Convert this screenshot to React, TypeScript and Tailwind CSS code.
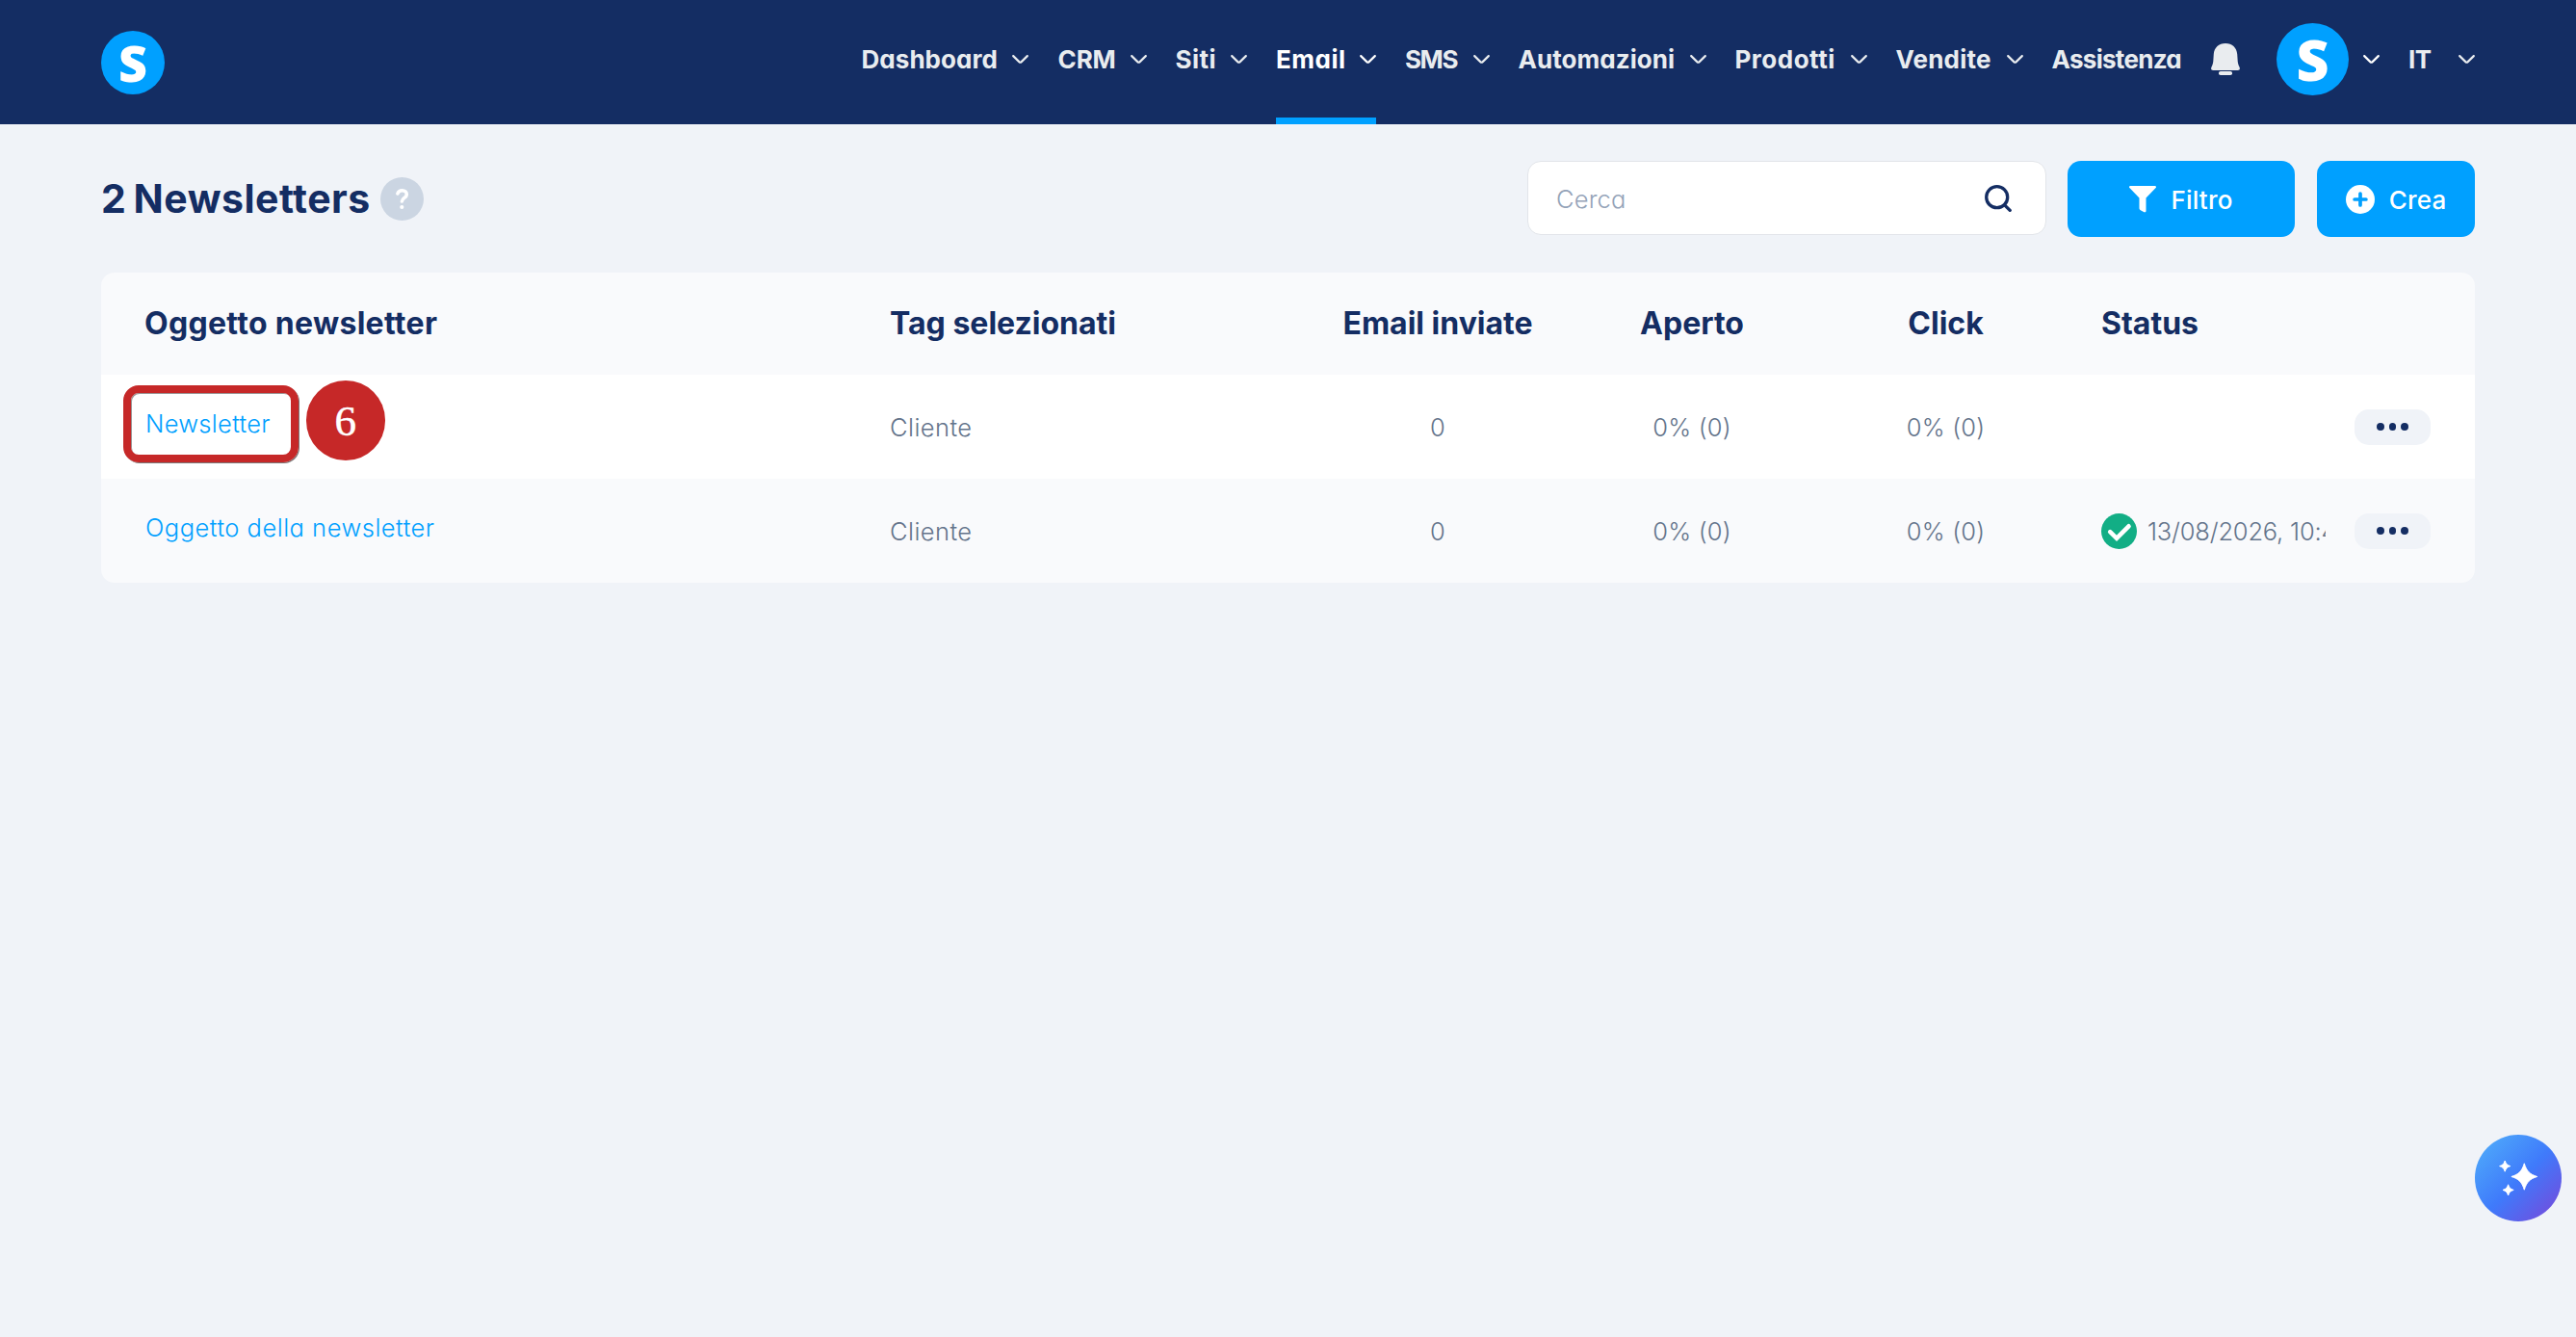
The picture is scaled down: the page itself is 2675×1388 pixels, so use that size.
const navItems = [
  { label: "Dashboard", width: "w-[157px] pl-px", tracking: "tracking-[0.05px]" },
  { label: "CRM", width: "w-[76px] pl-px", tracking: "tracking-[-0.1px]" },
  { label: "Siti", width: "w-[57.5px]", tracking: "tracking-[0.5px]" },
  { label: "Email", width: "w-[87px]", tracking: "tracking-[0.5px]", active: true },
  { label: "SMS", width: "w-[70.5px]", tracking: "tracking-[-1.4px]" },
  { label: "Automazioni", width: "w-[178px]", tracking: "tracking-[0.05px]" },
  { label: "Prodotti", width: "w-[120px]", tracking: "tracking-[0.5px]" },
  { label: "Vendite", width: "w-[115px]", tracking: "tracking-[0.2px]" },
]

const newsletters = [
  { subject: "Newsletter", tracking: "tracking-[0.3px]", tag: "Cliente", sent: "0", opened: "0% (0)", clicks: "0% (0)", date: "" },
  {
    subject: "Oggetto della newsletter",
    tracking: "tracking-[0.5px]",
    tag: "Cliente",
    sent: "0",
    opened: "0% (0)",
    clicks: "0% (0)",
    date: "13/08/2026, 10:45",
  },
]

const columns = "grid grid-cols-[772px_437px_264px_264px_263px_263px_155px] pl-[47px]"

function Chevron() {
  return (
    <svg width="17" height="9" viewBox="0 0 17 9" fill="none" className="shrink-0">
      <path
        d="M1.2 1.1L7.3 7.1Q8.5 8.2 9.7 7.1L15.8 1.1"
        stroke="currentColor"
        strokeWidth="2.2"
        strokeLinecap="round"
        strokeLinejoin="round"
      />
    </svg>
  )
}

function Header() {
  return (
    <header className="h-[129px] bg-[#142d63] flex justify-between pl-[105px] pr-[105px] text-[26px] font-bold text-[#e9ecef]">
      <div className="flex items-center pt-px">
        <div className="w-[66px] h-[66px] rounded-full bg-[#00a0ff] flex items-center justify-center text-white font-['Open_Sans',sans-serif] font-extrabold text-[52px] leading-none">
          S
        </div>
      </div>

      <nav className="flex [font-feature-settings:'cv11']">
        {navItems.map((item) => (
          <a
            key={item.label}
            href="#"
            className={`relative flex items-center pb-[6px] mr-[30px] ${item.active ? "text-white" : ""}`}
          >
            <span className={`${item.width} ${item.tracking} whitespace-nowrap`}>{item.label}</span>
            <Chevron />
            {item.active && <span className="absolute left-0 right-0 bottom-0 h-[7px] bg-[#00a0ff]" />}
          </a>
        ))}
        <a href="#" className="flex items-center pb-[6px] w-[135.5px] mr-[30px] tracking-[-0.7px]">
          Assistenza
        </a>
        <button type="button" className="flex items-center pb-[6px] mr-[38px]">
          <svg width="30" height="33" viewBox="0 0 30 33" fill="currentColor">
            <path d="M15 0C8 0 3.4 4.6 2.8 11L2.3 18.5C2.1 21 1.4 22.6.5 24.6C-.4 26.8.3 28 2.2 28H27.8C29.7 28 30.4 26.8 29.5 24.6C28.6 22.6 27.9 21 27.7 18.5L27.2 11C26.6 4.6 22 0 15 0Z" />
            <rect x="8" y="29" width="14" height="4" rx="1.8" />
          </svg>
        </button>
        <button type="button" className="flex items-center pb-[6px] gap-[15px] mr-[30px] text-white">
          <span className="w-[75px] h-[75px] rounded-full bg-[#00a0ff] flex items-center justify-center font-['Open_Sans',sans-serif] font-extrabold text-[59px] leading-none">
            S
          </span>
          <Chevron />
        </button>
        <button type="button" className="flex items-center pb-[6px]">
          <span className="w-[52px] text-left tracking-[-0.5px]">IT</span>
          <Chevron />
        </button>
      </nav>
    </header>
  )
}

function Toolbar() {
  return (
    <div className="flex items-start pt-[38px] px-[105px]">
      <div className="flex items-center h-[79px]">
        <h1 className="text-[41px] leading-none font-bold text-[#142d63] tracking-[0.5px] w-[290px] whitespace-nowrap [word-spacing:-3px]">
          2 Newsletters
        </h1>
        <svg width="45" height="45" viewBox="0 0 45 45" fill="none">
          <circle cx="22.5" cy="22.5" r="22.5" fill="#cbd5e2" />
          <path
            d="M17.9 17C18.6 14.8 20.4 13.7 22.6 13.7C25.4 13.7 27.3 15.5 27.3 17.9C27.3 21.2 22.6 21.6 22.4 25"
            stroke="#fff"
            strokeWidth="3.6"
            strokeLinecap="round"
          />
          <circle cx="22.3" cy="31" r="2.1" fill="#fff" />
        </svg>
      </div>

      <div className="ml-auto flex items-start">
        <div className="w-[539px] h-[77px] bg-white border border-[#e2e5ea] rounded-[14px] flex items-center justify-between pl-[29px] pr-[35px]">
          <span className="text-[25.5px] font-[350] text-[#94a3b8] tracking-[0.15px] [font-feature-settings:'cv11'] pt-[4px]">
            Cerca
          </span>
          <svg width="28" height="28" viewBox="0 0 28 28" fill="none" stroke="#142d63" strokeWidth="3.3" strokeLinecap="round">
            <circle cx="12.7" cy="12.7" r="11" />
            <path d="M20.6 20.8L26.2 26.4" />
          </svg>
        </div>
        <button
          type="button"
          className="ml-[22px] w-[236px] h-[79px] rounded-[14px] bg-[#00a0ff] text-white text-[26px] font-medium flex items-center justify-center gap-[15px] tracking-[0.2px]"
        >
          <svg width="28" height="28" viewBox="0 0 28 28" fill="currentColor">
            <path d="M1.2 0H26.8C28 0 28.4 1.2 27.6 2L17.5 12.5V25.8C17.5 27.2 16.6 27.6 15.5 27.2L11.8 25.2C10.9 24.7 10.5 24 10.5 23V12.5L.4 2C-.4 1.2 0 0 1.2 0Z" />
          </svg>
          <span className="pt-px">Filtro</span>
        </button>
        <button
          type="button"
          className="ml-[23px] w-[164px] h-[79px] rounded-[14px] bg-[#00a0ff] text-white text-[26px] font-medium flex items-center justify-center gap-[15px] tracking-[0.2px]"
        >
          <svg width="30" height="30" viewBox="0 0 30 30">
            <circle cx="15" cy="15" r="15" fill="#fff" />
            <path d="M15 9.1V20.9M9.1 15H20.9" stroke="#00a0ff" strokeWidth="3.7" strokeLinecap="round" />
          </svg>
          <span className="pt-px">Crea</span>
        </button>
      </div>
    </div>
  )
}

function MoreButton() {
  return (
    <button type="button" className="w-[79px] h-[37px] rounded-[15px] bg-[#f0f3f8] flex items-center justify-center gap-[4.7px]">
      <span className="w-[7.6px] h-[7.6px] rounded-full bg-[#142d63]" />
      <span className="w-[7.6px] h-[7.6px] rounded-full bg-[#142d63]" />
      <span className="w-[7.6px] h-[7.6px] rounded-full bg-[#142d63]" />
    </button>
  )
}

function NewsletterTable() {
  return (
    <div className="mx-[105px] mt-[37px] rounded-[14px] overflow-hidden">
      <div
        className={`${columns} h-[106px] items-center bg-[#f9fafc] text-[32px] font-bold text-[#142d63] whitespace-nowrap`}
      >
        <div className="-ml-[2px] tracking-[0.3px]">Oggetto newsletter</div>
        <div>Tag selezionati</div>
        <div className="text-center">Email inviate</div>
        <div className="text-center">Aperto</div>
        <div className="text-center">Click</div>
        <div className="pl-[30px]">Status</div>
      </div>

      {newsletters.map((row, index) => (
        <div
          key={row.subject}
          className={`${columns} h-[108px] items-center text-[25.5px] font-[350] text-[#64748b] tracking-[0.2px] whitespace-nowrap [font-feature-settings:'cv11'] ${index % 2 === 0 ? "bg-white" : "bg-[#f9fafc]"}`}
        >
          <div className="relative h-full flex items-center pb-[5px] -ml-px">
            <a href="#" className={`text-[#00a0ff] ${row.tracking}`}>
              {row.subject}
            </a>
            {index === 0 && (
              <>
                <span className="absolute -left-[23.5px] top-[11px] w-[182px] h-[80px] rounded-[16px] border-8 border-[#c62828] shadow-[1px_1px_0_#7c7777,inset_1px_1px_0_#9b9595]" />
                <span className="absolute left-[166.5px] top-[6px] w-[82.5px] h-[82.5px] rounded-full bg-[#c62828] text-white flex items-center justify-center font-['Liberation_Serif',serif] font-normal text-[45px] leading-none pt-[3px] [-webkit-text-stroke:0.5px_white]">
                  6
                </span>
              </>
            )}
          </div>
          <div className="pt-[3px] tracking-[0.45px]">{row.tag}</div>
          <div className="pt-[3px] text-center">{row.sent}</div>
          <div className="pt-[3px] text-center">{row.opened}</div>
          <div className="pt-[3px] text-center">{row.clicks}</div>
          <div className="pl-[30px] overflow-hidden flex items-center">
            {row.date && (
              <>
                <svg width="37" height="37" viewBox="0 0 37 37" fill="none" className="shrink-0 mr-[11px]">
                  <circle cx="18.5" cy="18.5" r="18.5" fill="#12ae85" />
                  <path d="M9.2 19.2L16 25.8L28.5 13.3" stroke="#fff" strokeWidth="4.6" strokeLinecap="round" />
                </svg>
                <span className="pt-[3px] tracking-[-0.2px]">{row.date}</span>
              </>
            )}
          </div>
          <div className="pl-[30px]">
            <MoreButton />
          </div>
        </div>
      ))}
    </div>
  )
}

function AssistantButton() {
  return (
    <button
      type="button"
      className="fixed left-[2570px] top-[1178px] w-[90px] h-[90px] rounded-full bg-[linear-gradient(135deg,#4facfa_5%,#3f7afb_52%,#7b45d8_100%)]"
    >
      <svg width="90" height="90" viewBox="0 0 90 90" fill="#fff" stroke="#fff" strokeWidth="1" strokeLinejoin="round">
        <path d="M51.3 29.8C53.6 37.8 57.2 41.3 64.7 43.5C57.2 45.7 53.6 49.2 51.3 57.2C49 49.2 45.4 45.7 37.9 43.5C45.4 41.3 49 37.8 51.3 29.8Z" />
        <path d="M31.2 27C32.1 30.2 33.6 31.7 36.8 32.6C33.6 33.5 32.1 35 31.2 38.2C30.3 35 28.8 33.5 25.6 32.6C28.8 31.7 30.3 30.2 31.2 27Z" />
        <path d="M34.6 51.8C35.5 55 37 56.5 40.2 57.4C37 58.3 35.5 59.8 34.6 63C33.7 59.8 32.2 58.3 29 57.4C32.2 56.5 33.7 55 34.6 51.8Z" />
      </svg>
    </button>
  )
}

export default function App() {
  return (
    <div className="min-h-screen bg-[#f0f3f8] font-['Inter',sans-serif]">
      <Header />
      <Toolbar />
      <NewsletterTable />
      <AssistantButton />
    </div>
  )
}
